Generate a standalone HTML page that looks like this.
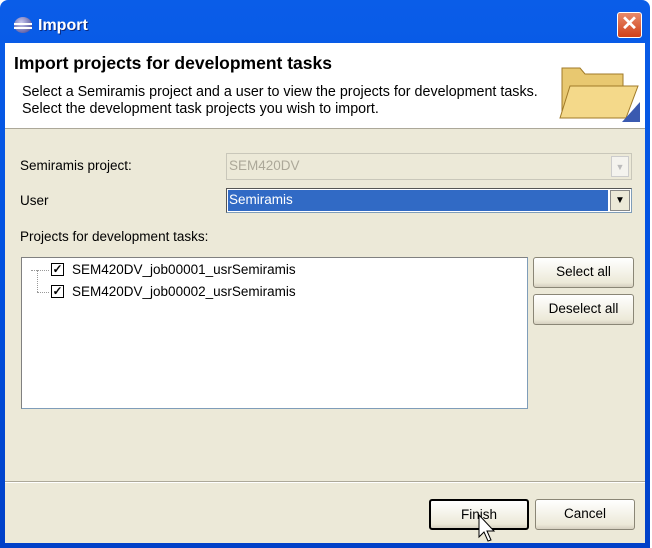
<!DOCTYPE html>
<html><head><style>
*{margin:0;padding:0;box-sizing:border-box}
body{width:652px;height:548px;overflow:hidden;background:#fff;font-family:Tahoma,"Liberation Sans",sans-serif;font-size:13.5px;color:#000;position:relative}
.win{position:absolute;left:0;top:0;width:650px;height:548px;background:linear-gradient(#0a5de8,#0050e0 50%,#0040c8);border-radius:8px 8px 0 0}
.abs{position:absolute}
.body{position:absolute;left:5px;top:43px;width:640px;height:500px;background:#ece9d8}
.hdr{position:absolute;left:5px;top:43px;width:640px;height:86px;background:#fff;border-bottom:1px solid #aca899}
.btn{position:absolute;background:linear-gradient(#fff,#ece9d8 85%,#d6d0c0);border:1px solid #8a8676;border-radius:3px;text-align:center;font-size:13.5px}
.cb{position:absolute;width:13px;height:13px;border:1px solid #000;background:#fff}
</style></head><body>
<div class="win"></div>
<div class="abs" style="left:14px;top:17px;width:18px;height:16px;border-radius:50%;background:radial-gradient(circle at 40% 35%,#c8c8f0,#3a3a8a);"></div>
<div class="abs" style="left:14px;top:23px;width:18px;height:2px;background:#fff"></div>
<div class="abs" style="left:14px;top:27px;width:18px;height:2px;background:#fff"></div>
<div class="abs" style="left:38px;top:17px;color:#fff;font-weight:bold;font-size:16px;text-shadow:1px 1px #0a2a80">Import</div>
<div class="abs" style="left:617px;top:12px;width:25px;height:26px;background:linear-gradient(#e88a6a,#d0401a);border:1px solid #fff;border-radius:3px;color:#fff;font-size:20px;line-height:23px;text-align:center;font-weight:bold">✕</div>
<div class="body"></div>
<div class="hdr"></div>
<div class="abs" style="left:14px;top:53px;font-weight:bold;font-size:17.5px">Import projects for development tasks</div>
<div class="abs" style="left:22px;top:84px;line-height:17px;font-size:14.3px">Select a Semiramis project and a user to view the projects for development tasks.<br>Select the development task projects you wish to import.</div>
<svg class="abs" style="left:556px;top:56px" width="86" height="68"><path d="M6 12h18l5 6h38v42H6z" fill="#e8c870" stroke="#a07a28"/><path d="M14 30h68l-12 32H4z" fill="#f4d98a" stroke="#a07a28"/><path d="M84 46v20H66z" fill="#3a5ab0"/></svg>
<div class="abs" style="left:20px;top:158px">Semiramis project:</div>
<div class="abs" style="left:226px;top:153px;width:406px;height:27px;border:1px solid #c9c7ba;background:#ece9d8;color:#aca899;padding:4px 2px">SEM420DV</div>
<div class="abs" style="left:611px;top:156px;width:18px;height:21px;border:1px solid #ccc;background:#f4f3ee;color:#bbb;font-size:9px;text-align:center;line-height:20px">▼</div>
<div class="abs" style="left:20px;top:193px">User</div>
<div class="abs" style="left:226px;top:188px;width:406px;height:25px;border:1px solid #7f9db9;border-top-color:#555;border-left-color:#555;background:#fff"></div>
<div class="abs" style="left:228px;top:190px;width:380px;height:21px;background:#316ac5;color:#fff;padding:2px 1px">Semiramis</div>
<div class="abs" style="left:610px;top:190px;width:20px;height:21px;border:1px solid #888;background:#ece9d8;font-size:10px;text-align:center;line-height:20px">▼</div>
<div class="abs" style="left:20px;top:229px">Projects for development tasks:</div>
<div class="abs" style="left:21px;top:257px;width:507px;height:152px;border:1px solid #7f9db9;border-top-color:#808080;border-left-color:#808080;background:#fff"></div>
<div class="abs" style="left:37px;top:270px;width:1px;height:22px;border-left:1px dotted #999"></div>
<div class="abs" style="left:31px;top:270px;width:18px;border-top:1px dotted #999"></div>
<div class="abs" style="left:37px;top:292px;width:12px;border-top:1px dotted #999"></div>
<div class="cb" style="left:51px;top:263px;font-size:12px;line-height:11px;text-align:center;font-weight:bold">✓</div>
<div class="cb" style="left:51px;top:285px;font-size:12px;line-height:11px;text-align:center;font-weight:bold">✓</div>
<div class="abs" style="left:72px;top:262px">SEM420DV_job00001_usrSemiramis</div>
<div class="abs" style="left:72px;top:284px">SEM420DV_job00002_usrSemiramis</div>
<div class="btn" style="left:533px;top:257px;width:101px;height:31px;line-height:28px">Select all</div>
<div class="btn" style="left:533px;top:294px;width:101px;height:31px;line-height:28px">Deselect all</div>
<div class="abs" style="left:5px;top:481px;width:640px;border-top:1px solid #aca899;border-bottom:1px solid #fff"></div>
<div class="btn" style="left:429px;top:499px;width:100px;height:31px;line-height:27px;border:2px solid #000">Finish</div>
<div class="btn" style="left:535px;top:499px;width:100px;height:31px;line-height:28px">Cancel</div>
<svg class="abs" style="left:478px;top:514px" width="22" height="30"><path d="M1 1v22l5-5 4 9 3-1-4-9h7z" fill="#fff" stroke="#000"/></svg>
</body></html>
